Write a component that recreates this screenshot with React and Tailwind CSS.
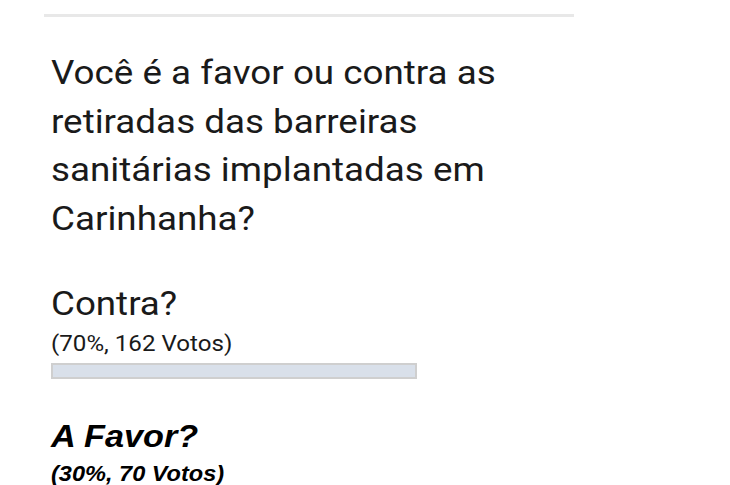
import React from "react";

export default function App() {
  return (
    <div className="w-[730px] h-[485px] bg-white overflow-hidden">
      <div className="ml-[44px] w-[530px] pt-[14px]">
        <div className="h-[3px] bg-[#e8e8e8]" />
        <div className="pl-[7px] pt-[31px]">
          <h2 className="w-[470px] origin-left scale-x-[1.082] text-[34px] leading-[48.7px] text-[#1a1a1a] font-['Roboto',sans-serif] font-normal">
            Você é a favor ou contra as retiradas das barreiras sanitárias implantadas em Carinhanha?
          </h2>
          <div className="mt-[40px] font-['Roboto',sans-serif] text-[#1a1a1a]">
            <div className="origin-left scale-x-[1.08] text-[34px] leading-[40px]">Contra?</div>
            <div className="mt-[8px] origin-left scale-x-[1.097] text-[22px] leading-[26px]">(70%, 162 Votos)</div>
            <div className="mt-[6px] w-[366px] h-[16px] border-2 border-[#cfcfcf] bg-[#d9e0ea]" />
          </div>
          <div className="mt-[37px] font-['Liberation_Sans',Arial,sans-serif] font-bold italic text-black origin-left scale-x-[1.07]">
            <div className="text-[32px] leading-[40px]">A Favor?</div>
            <div className="mt-[4px] text-[22px] leading-[28px]">(30%, 70 Votos)</div>
          </div>
        </div>
      </div>
    </div>
  );
}
